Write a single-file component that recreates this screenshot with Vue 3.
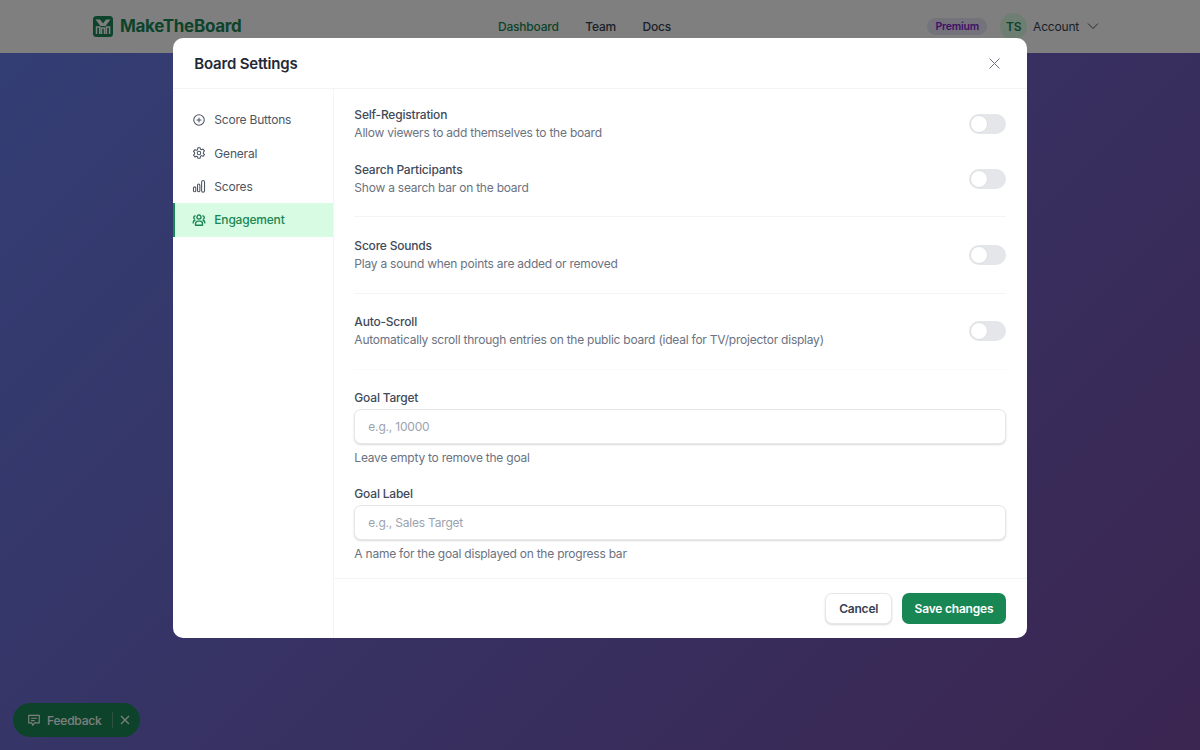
<template>
  <div class="page">
    <header class="topbar">
      <div class="topbar__brand">
        <svg class="logo" width="20" height="21" viewBox="0 0 20 21">
          <rect width="20" height="21" rx="3.500" fill="#198754" />
          <path d="M2.500 3.500h4.500l3 4 3-4h4.500l-5 6.500h-5z" fill="#fff" />
          <path d="M3.500 18v-7h3.200v7M8.500 18v-6h3v6M13.400 18v-7h3.200v7" fill="none" stroke="#fff" stroke-width="1.500" />
        </svg>
        <span class="brand-name">MakeTheBoard</span>
      </div>
      <nav class="topbar__nav">
        <a class="nav-link nav-link--active">Dashboard</a>
        <a class="nav-link">Team</a>
        <a class="nav-link">Docs</a>
      </nav>
      <div class="topbar__account">
        <span class="plan-badge">Premium</span>
        <span class="avatar">TS</span>
        <span class="account-label">Account</span>
        <svg width="12" height="12" viewBox="0 0 12 12" fill="none" stroke="#4b5563" stroke-width="1">
          <path d="M1 3.500l5 5 5-5" />
        </svg>
      </div>
    </header>

    <div class="feedback">
      <svg width="14" height="14" viewBox="0 0 24 24" fill="none" stroke="currentColor" stroke-width="2">
        <path d="M3 4h18v13h-8l-3 4-2-4H3z" />
        <path d="M7 9h10M7 13h6" />
      </svg>
      <span class="feedback__label">Feedback</span>
      <span class="feedback__sep"></span>
      <svg width="10" height="10" viewBox="0 0 10 10" fill="none" stroke="currentColor" stroke-width="1.200">
        <path d="M1 1l8 8M9 1l-8 8" />
      </svg>
    </div>

    <div class="backdrop">
      <div class="modal">
        <div class="modal__header">
          <h2 class="modal__title">Board Settings</h2>
          <svg width="11" height="11" viewBox="0 0 11 11" fill="none" stroke="#6b7280" stroke-width="1">
            <path d="M.500.500l10 10M10.500.500l-10 10" />
          </svg>
        </div>
        <div class="modal__body">
          <aside class="sidebar">
            <div
              v-for="tab in tabs"
              :key="tab.name"
              class="tab"
              :class="{ 'tab--active': tab.name === 'Engagement' }"
            >
              <svg width="14" height="14" viewBox="0 0 24 24" fill="none" stroke="currentColor" stroke-linecap="round" stroke-linejoin="round" class="tab__icon">
                <path v-for="d in tab.paths" :key="d" :d="d" />
              </svg>
              {{ tab.name }}
            </div>
          </aside>
          <div class="content">
            <div class="scroll">
              <div class="toggle-group toggle-group--first">
                <div class="setting">
                  <div>
                    <div class="setting__title">Self-Registration</div>
                    <div class="hint">Allow viewers to add themselves to the board</div>
                  </div>
                  <span class="switch"><span class="switch__knob"></span></span>
                </div>
                <div class="setting setting--gap">
                  <div>
                    <div class="setting__title">Search Participants</div>
                    <div class="hint">Show a search bar on the board</div>
                  </div>
                  <span class="switch"><span class="switch__knob"></span></span>
                </div>
              </div>
              <div class="toggle-group">
                <div class="setting">
                  <div>
                    <div class="setting__title">Score Sounds</div>
                    <div class="hint">Play a sound when points are added or removed</div>
                  </div>
                  <span class="switch"><span class="switch__knob"></span></span>
                </div>
              </div>
              <div class="toggle-group toggle-group--last">
                <div class="setting">
                  <div>
                    <div class="setting__title">Auto-Scroll</div>
                    <div class="hint">Automatically scroll through entries on the public board (ideal for TV/projector display)</div>
                  </div>
                  <span class="switch"><span class="switch__knob"></span></span>
                </div>
              </div>
              <div class="field">
                <label class="setting__title">Goal Target</label>
                <input class="input" placeholder="e.g., 10000" />
                <div class="hint">Leave empty to remove the goal</div>
              </div>
              <div class="field">
                <label class="setting__title">Goal Label</label>
                <input class="input" placeholder="e.g., Sales Target" />
                <div class="hint">A name for the goal displayed on the progress bar</div>
              </div>
            </div>
            <div class="modal__footer">
              <button class="btn btn--ghost">Cancel</button>
              <button class="btn btn--primary">Save changes</button>
            </div>
          </div>
        </div>
      </div>
    </div>
  </div>
</template>

<script setup>
const tabs = [
  { name: 'Score Buttons', paths: ['M12 3a9 9 0 1 0 0 18 9 9 0 0 0 0-18z', 'M12 8.500v7', 'M8.500 12h7'] },
  {
    name: 'General',
    paths: [
      'M10 3h4l.6 2.600 2 .9 2.300-1.300 2.500 3.100-1.800 2 0 2.400 1.800 2-2.500 3.100-2.300-1.300-2 .9L14 21h-4l-.6-2.600-2-.9-2.300 1.300-2.500-3.100 1.800-2 0-2.400-1.800-2 2.500-3.100 2.300 1.300 2-.9z',
      'M12 9a3 3 0 1 0 0 6 3 3 0 0 0 0-6z',
    ],
  },
  {
    name: 'Scores',
    paths: [
      'M2.500 15.500a2 2 0 0 1 4 0V20a1.500 1.500 0 0 1-4 0z',
      'M9.500 10.500a2 2 0 0 1 4 0V20a1.500 1.500 0 0 1-4 0z',
      'M16.500 5a2.500 2.500 0 0 1 5 0v15a2 2 0 0 1-5 0z',
    ],
  },
  {
    name: 'Engagement',
    paths: [
      'M12 3.500a3.500 3.500 0 1 0 0 7 3.500 3.500 0 0 0 0-7z',
      'M6 21v-2.500a4.500 4.500 0 0 1 4.500-4.500h3a4.500 4.500 0 0 1 4.500 4.500V21z',
      'M5.500 5a2.800 2.800 0 0 0-1 5.300',
      'M18.500 5a2.800 2.800 0 0 1 1 5.300',
      'M2 17c0-2.500 1-4 3-4.500',
      'M22 17c0-2.500-1-4-3-4.500',
    ],
  },
]
</script>

<style>
html,
body {
  margin: 0;
}
</style>

<style scoped>
.page {
  position: relative;
  width: 1200px;
  height: 750px;
  overflow: hidden;
  background: linear-gradient(135deg, #667eea 0%, #764ba2 100%);
  font-family: Inter, "Liberation Sans", sans-serif;
  font-size: 12px;
  letter-spacing: -0.2px;
}

.topbar {
  display: flex;
  align-items: center;
  height: 53px;
  padding: 0 101px 1px 93px;
  box-sizing: border-box;
  background: #fff;
}

.topbar__brand {
  display: flex;
  align-items: center;
  gap: 7px;
  width: 405px;
}

.brand-name {
  font-size: 17px;
  font-weight: 700;
  letter-spacing: -0.3px;
  color: #198754;
}

.topbar__nav {
  display: flex;
  gap: 26.500px;
}

.nav-link {
  font-weight: 500;
  color: #374151;
}

.nav-link--active {
  color: #198754;
}

.topbar__account {
  display: flex;
  align-items: center;
  margin-left: auto;
  color: #374151;
}

.plan-badge {
  padding: 2px 8px;
  font-size: 10.500px;
  font-weight: 600;
  color: #7e22ce;
  background: #e9e5f5;
  border-radius: 10px;
}

.avatar {
  display: flex;
  align-items: center;
  justify-content: center;
  width: 27px;
  height: 27px;
  margin: 0 6px 0 13px;
  font-weight: 600;
  color: #198754;
  background: #dcfce7;
  border-radius: 50%;
}

.account-label {
  margin-right: 8px;
}

.feedback {
  position: absolute;
  left: 13px;
  top: 703px;
  display: flex;
  align-items: center;
  height: 34px;
  padding: 0 10px 0 14px;
  color: #fff;
  background: #198754;
  border-radius: 17px;
  font-weight: 500;
}

.feedback__label {
  margin: 0 10px 0 6px;
}

.feedback__sep {
  width: 1px;
  height: 16px;
  margin-right: 7px;
  background: rgba(255, 255, 255, 0.25);
}

.backdrop {
  position: absolute;
  inset: 0;
  display: flex;
  justify-content: center;
  padding-top: 38px;
  box-sizing: border-box;
  background: rgba(0, 0, 0, 0.5);
}

.modal {
  display: flex;
  flex-direction: column;
  width: 853.330px;
  height: 600px;
  background: #fff;
  border-radius: 10px;
  overflow: hidden;
}

.modal__header {
  display: flex;
  align-items: center;
  justify-content: space-between;
  height: 50px;
  padding: 0 27px 0 21px;
  flex-shrink: 0;
  border-bottom: 1px solid #f3f4f6;
}

.modal__title {
  margin: 0;
  font-size: 15px;
  font-weight: 600;
  color: #1f2937;
}

.modal__body {
  display: flex;
  flex: 1;
  min-height: 0;
}

.sidebar {
  width: 161px;
  flex-shrink: 0;
  padding-top: 14px;
  box-sizing: border-box;
  border-right: 1px solid #f3f4f6;
}

.tab {
  display: flex;
  align-items: center;
  gap: 8px;
  height: 33.400px;
  padding-left: 19px;
  color: #4b5563;
}

.tab__icon {
  stroke-width: 1.800;
}

.tab--active {
  padding-left: 17px;
  font-weight: 500;
  color: #198754;
  background: #d8fbe3;
  border-left: 2px solid #198754;
}

.tab--active .tab__icon {
  stroke-width: 2.400;
}

.content {
  display: flex;
  flex-direction: column;
  flex: 1;
  min-width: 0;
}

.scroll {
  flex: 1;
  padding: 17px 21px 0 20px;
}

.toggle-group {
  padding: 20px 0;
  border-bottom: 1px solid #f3f4f6;
}

.toggle-group--first {
  padding: 0 0 19px;
}

.toggle-group--last {
  padding: 19px 0 20px;
  border-bottom-color: #f9fafb;
}

.setting {
  display: flex;
  align-items: center;
  justify-content: space-between;
}

.setting--gap {
  margin-top: 19px;
}

.setting__title {
  display: block;
  line-height: 18px;
  font-weight: 500;
  color: #3f4a5a;
}

.hint {
  line-height: 18px;
  letter-spacing: -0.23px;
  color: #6b7280;
}

.switch {
  position: relative;
  width: 37px;
  height: 20px;
  flex-shrink: 0;
  background: #e4e6e9;
  border-radius: 10px;
}

.switch__knob {
  position: absolute;
  top: 1px;
  left: 1px;
  width: 18px;
  height: 18px;
  box-sizing: border-box;
  background: #fff;
  border: 1px solid #dcdfe3;
  border-radius: 50%;
}

.field {
  margin-top: 19px;
}

.field + .field {
  margin-top: 18px;
}

.input {
  display: block;
  width: 100%;
  height: 35px;
  margin: 2px 0 5px;
  padding: 0 13px;
  box-sizing: border-box;
  font-family: inherit;
  font-size: 12px;
  letter-spacing: inherit;
  background: #fff;
  border: 1px solid #e5e7eb;
  border-radius: 7px;
  box-shadow: 0 1px 2px rgba(0, 0, 0, 0.15);
  outline: none;
}

.input::placeholder {
  color: #9ca3af;
}

.modal__footer {
  display: flex;
  justify-content: flex-end;
  gap: 10px;
  padding: 14px 21px 14px 20px;
  border-top: 1px solid #f3f4f6;
}

.btn {
  height: 31px;
  padding: 0 13px;
  font-family: inherit;
  font-size: 12px;
  letter-spacing: inherit;
  font-weight: 600;
  border-radius: 7px;
}

.btn--ghost {
  color: #374151;
  background: #fff;
  border: 1.500px solid #e5e7eb;
  box-shadow: 0 1px 2px rgba(0, 0, 0, 0.15);
}

.btn--primary {
  padding: 0 12.300px;
  color: #fff;
  background: #198754;
  border: none;
}
</style>
